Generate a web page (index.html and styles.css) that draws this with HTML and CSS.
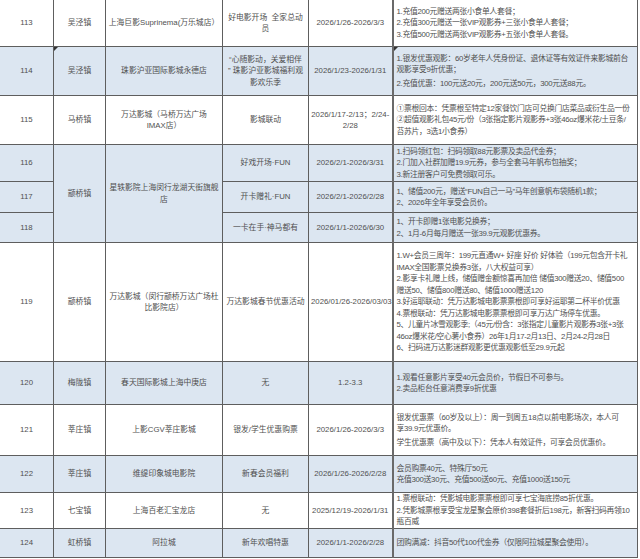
FILE: index.html
```html
<!DOCTYPE html>
<html lang="zh-CN">
<head>
<meta charset="utf-8">
<title>影城优惠活动</title>
<link rel="stylesheet" href="styles.css">
</head>
<body>
<table class="sheet">
  <colgroup>
    <col class="c-no"><col class="c-town"><col class="c-cinema"><col class="c-act"><col class="c-date"><col class="c-desc">
  </colgroup>
  <tbody>
    <tr class="r113">
      <td>113</td><td>吴泾镇</td><td>上海巨影Suprinema(万乐城店）</td><td>好电影开场&nbsp;&nbsp;全家总动<br>员</td><td>2026/1/26-2026/3/3</td>
      <td class="desc"><div>1.充值200元赠送两张小食单人套餐；</div><div>2.充值300元赠送一张VIP观影券+三张小食单人套餐；</div><div>3.充值500元赠送两张VIP观影券+五张小食单人套餐。</div></td>
    </tr>
    <tr class="r114 blue">
      <td>114</td><td class="mark">吴泾镇</td><td>珠影沪亚国际影城永德店</td><td>“心随影动，关爱相伴<br>” 珠影沪亚影城福利观<br>影欢乐季</td><td>2026/1/23-2026/1/31</td>
      <td class="desc mark"><div>1.银发优惠观影：60岁老年人凭身份证、退休证等有效证件来影城前台<br>观影享受9折优惠；</div><div class="gap">2.充值优惠：100元送20元，200元送50元，300元送88元。</div></td>
    </tr>
    <tr class="r115">
      <td>115</td><td>马桥镇</td><td>万达影城（马桥万达广场<br>IMAX店）</td><td>影城联动</td><td>2026/1/17-2/13；2/24-<br>2/28</td>
      <td class="desc"><div>①票根回本：凭票根至特定12家餐饮门店可兑换门店菜品或衍生品一份</div><div>②超值观影礼包45元/份（3张指定影片观影券+3张46oz爆米花/土豆条/<br>苔苏片，3选1小食券）</div></td>
    </tr>
    <tr class="r116 blue">
      <td>116</td><td rowspan="3">颛桥镇</td><td rowspan="3">星轶影院上海闵行龙湖天街旗舰<br>店</td><td>好戏开场·FUN</td><td>2026/2/1-2026/3/31</td>
      <td class="desc"><div>1.扫码领红包：扫码领取88元影票及卖品代金券；</div><div>2.门加入社群加赠19.9元券，参与全套马年帆布包抽奖；</div><div>3.新注册客户可免费领取可乐。</div></td>
    </tr>
    <tr class="r117 blue">
      <td>117</td><td>开卡赠礼·FUN</td><td>2026/2/1-2026/2/28</td>
      <td class="desc"><div>1、储值200元，赠送“FUN自己一马”马年创意帆布袋随机1款；</div><div>2、2026年全年享受会员价。</div></td>
    </tr>
    <tr class="r118 blue">
      <td>118</td><td>一卡在手·神马都有</td><td>2026/1/1-2026/6/30</td>
      <td class="desc"><div>1、开卡即赠1张电影兑换券；</div><div>2、1月-6月每月赠送一张39.9元观影优惠券。</div></td>
    </tr>
    <tr class="r119">
      <td>119</td><td>颛桥镇</td><td>万达影城（闵行颛桥万达广场杜<br>比影院店）</td><td>万达影城春节优惠活动</td><td>2026/01/26-2026/03/03</td>
      <td class="desc"><div>1.W+会员三周年：199元直通W+ 好座 好价 好体验（199元包含开卡礼<br>IMAX全国影票兑换券3张，八大权益可享）</div><div>2.影享卡礼赠上线，储值赠金额惊喜再加倍 储值300赠送20、储值500<br>赠送50、储值800赠送80、储值1000赠送120</div><div>3.好运耶联动：凭万达影城电影票票根即可享好运耶第二杯半价优惠</div><div>4.票根联动：凭万达影城电影票票根即可享万达广场停车优惠。</div><div>5、儿童片冰雪观影季;（45元/份含：3张指定儿童影片观影券3张+3张<br>46oz爆米花/空心薯小食券）26年1月17-2月13日、2月24-2月28日</div><div>6、扫码进万达影迷群观影更优惠观影低至29.9元起</div></td>
    </tr>
    <tr class="r120 blue">
      <td>120</td><td>梅陇镇</td><td>春天国际影城上海中庚店</td><td>无</td><td>1.2-3.3</td>
      <td class="desc"><div>1.观看任意影片享受40元会员价，节假日不可参与。</div><div>2.卖品柜台任意消费享9折优惠</div></td>
    </tr>
    <tr class="r121">
      <td>121</td><td>莘庄镇</td><td>上影CGV莘庄影城</td><td>银发/学生优惠购票</td><td>2026/1/26-2026/3/3</td>
      <td class="desc"><div>银发优惠票（60岁及以上）：周一到周五18点以前电影场次，本人可<br>享39.9元优惠价。</div><div class="gap">学生优惠票（高中及以下）：凭本人有效证件，可享会员优惠价。</div></td>
    </tr>
    <tr class="r122 blue">
      <td>122</td><td>莘庄镇</td><td>维缇印象城电影院</td><td>新春会员福利</td><td>2026/1/26-2026/2/28</td>
      <td class="desc"><div>会员购票40元、特殊厅50元</div><div>充值300送30元、充值500送60元、充值1000送150元</div></td>
    </tr>
    <tr class="r123">
      <td>123</td><td>七宝镇</td><td>上海百老汇宝龙店</td><td>无</td><td>2025/12/19-2026/1/31</td>
      <td class="desc"><div>1.票根联动：凭影城电影票票根即可享七宝海底捞85折优惠。</div><div>2.凭影城票根享受宝龙星聚会原价398套餐折后198元，新客扫码再领10<br>瓶百威</div></td>
    </tr>
    <tr class="r124 blue">
      <td>124</td><td>虹桥镇</td><td>阿拉城</td><td>新年欢唱特惠</td><td>2026/1/1-2026/2/28</td>
      <td class="desc"><div>团购满减：抖音50代100代金券（仅限阿拉城星聚会使用）。</div></td>
    </tr>
  </tbody>
</table>
</body>
</html>
```

FILE: styles.css
```css
html, body {
  margin: 0;
  padding: 0;
  background: #ffffff;
}

body {
  width: 640px;
  height: 559px;
  overflow: hidden;
  font-family: "Liberation Sans", "Noto Sans CJK SC", sans-serif;
  font-size: 7.8px;
  line-height: 11.5px;
  color: #505050;
}

.sheet {
  border-collapse: collapse;
  table-layout: fixed;
  width: 638px;
  margin: -1px 0 0 -1px;
}

.c-no { width: 54px; }
.c-town { width: 52px; }
.c-cinema { width: 117px; }
.c-act { width: 86px; }
.c-date { width: 84px; }
.c-desc { width: 245px; }

.sheet td {
  border: 1px solid #5e5e5e;
  padding: 0 2px;
  text-align: center;
  vertical-align: middle;
  white-space: nowrap;
  overflow: visible;
}

.sheet td.desc {
  text-align: left;
  padding: 0 2px 0 3px;
  border-left: 2px solid #6a6a6a;
  letter-spacing: -0.3px;
}

.gap { margin-top: 2px; }

.blue td { background: #dce6f1; }

.mark { position: relative; }
.mark::before {
  content: "";
  position: absolute;
  left: 0;
  top: 0;
  border-top: 4px solid #333333;
  border-right: 4px solid transparent;
}

.r113 { height: 47px; }
.r114 { height: 49px; }
.r115 { height: 49px; }
.r116 { height: 37px; }
.r117 { height: 31px; }
.r118 { height: 30px; }
.r119 { height: 119px; }
.r120 { height: 43px; }
.r121 { height: 51px; }
.r122 { height: 37px; }
.r123 { height: 36px; }
.r124 { height: 29px; }
```
